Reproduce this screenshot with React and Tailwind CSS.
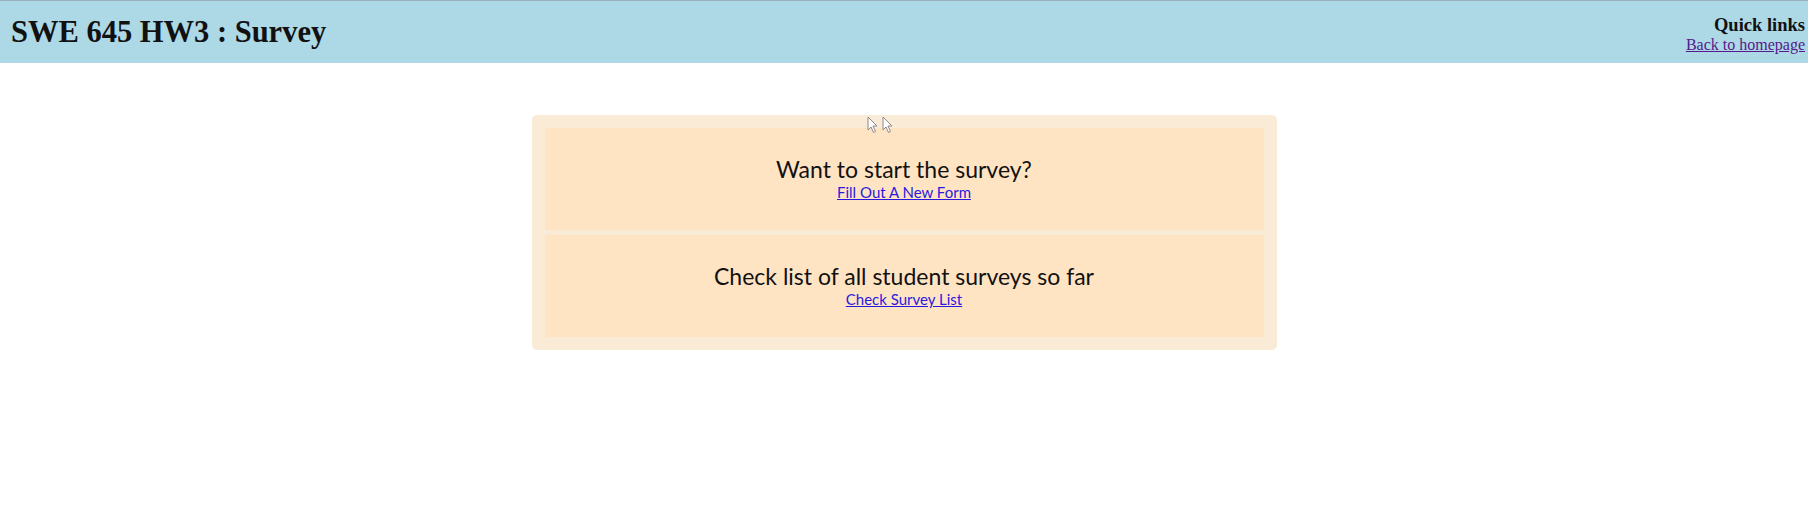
import React from "react";

const Cursor = ({ className }) => (
  <svg
    className={className}
    width="11"
    height="18"
    viewBox="0 0 11 18"
    fill="none"
  >
    <path
      d="M1 1 L1 14 L4 11 L6.5 16.5 L8.5 15.5 L6 10 L10 10 Z"
      fill="#ffffff"
      stroke="#8a8a8a"
      strokeWidth="1"
      strokeLinejoin="round"
    />
  </svg>
);

function OptionCard({ title, linkText }) {
  return (
    <div className="h-[102px] bg-[#ffe4c4] flex flex-col items-center justify-center text-center">
      <h3 className="text-[23px] leading-[27px] text-[#111] font-['Lato','Open_Sans',sans-serif]">
        {title}
      </h3>
      <a
        href="#"
        className="text-[15px] leading-[19px] text-[#2a1ae0] underline font-['Lato','Open_Sans',sans-serif]"
      >
        {linkText}
      </a>
    </div>
  );
}

export default function App() {
  return (
    <div className="min-h-[507px] bg-white relative">
      <header className="h-[63px] bg-[#add8e6] border-t border-[#9db0bd] flex items-center justify-between">
        <h1 className="pl-[11px] pt-[1px] text-[30.5px] font-bold text-[#111] font-['Liberation_Serif',serif]">
          SWE 645 HW3 : Survey
        </h1>
        <div className="text-right pr-[3px] pt-[6px] font-['Liberation_Serif',serif] leading-[20px]">
          <div className="text-[18.5px] font-bold text-[#111]">Quick links</div>
          <a href="#" className="text-[16px] text-[#551a8b] underline">
            Back to homepage
          </a>
        </div>
      </header>

      <main className="pt-[52px]">
        <div className="mx-auto w-[745px] rounded-[5px] bg-[#faebd7] p-[13px] flex flex-col gap-[5px]">
          <OptionCard
            title="Want to start the survey?"
            linkText="Fill Out A New Form"
          />
          <OptionCard
            title="Check list of all student surveys so far"
            linkText="Check Survey List"
          />
        </div>
      </main>

      {/* stray cursors captured in the screenshot */}
      <Cursor className="absolute left-[867px] top-[116px]" />
      <Cursor className="absolute left-[882px] top-[116px]" />
    </div>
  );
}
